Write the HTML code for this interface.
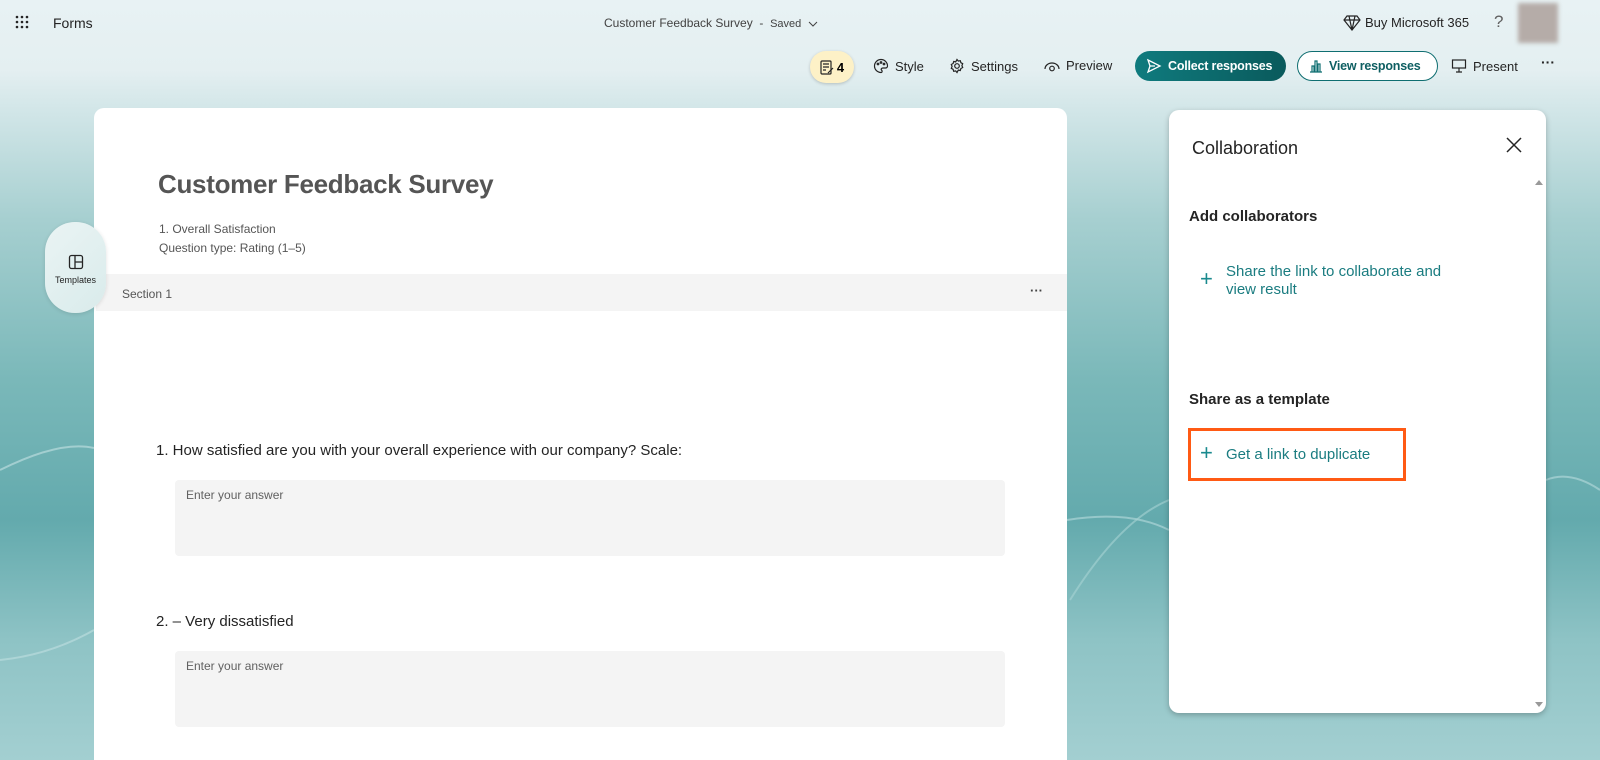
<!DOCTYPE html>
<html style="background:#a3cfd1"><head><meta charset="utf-8"><style>
*{margin:0;padding:0;box-sizing:border-box}
html,body{width:1600px;height:760px;overflow:hidden}
body{font-family:"Liberation Sans",sans-serif;position:relative;
background:linear-gradient(180deg,#e8f2f4 0px,#e4eff1 70px,#d2e6e8 110px,#a6cfd0 220px,#7ab8b9 380px,#63aaad 520px,#8ec3c5 640px,#a3cfd1 760px);}
.abs{position:absolute}
.t{color:#242424;font-size:13px}
.card{left:94px;top:108px;width:973px;height:660px;background:#fff;border-radius:10px 10px 0 0}
.panel{left:1169px;top:110px;width:377px;height:603px;background:#fff;border-radius:10px;box-shadow:0 2px 6px rgba(0,0,0,.25)}
.inp{background:#f4f4f4;border-radius:4px;width:830px;height:76px;left:175px;font-size:12px;color:#616161;padding:8px 11px}
.btn{top:51px;height:30px;border-radius:15px;font-size:12.5px;font-weight:bold;display:flex;align-items:center;gap:6px;padding:0 11px;white-space:nowrap;letter-spacing:-.2px}
.nav{top:58px;font-size:13px;color:#242424;display:flex;align-items:center;gap:6px;white-space:nowrap}
</style></head><body>
<svg class="abs" style="left:0;top:380px" width="1600" height="380"><path d="M0 90 Q60 60 94 68" stroke="#b9dcdd" stroke-width="2" fill="none" opacity=".7"/><path d="M0 280 Q50 275 94 250" stroke="#b9dcdd" stroke-width="2" fill="none" opacity=".7"/><path d="M1067 140 Q1130 130 1169 150" stroke="#b9dcdd" stroke-width="2" fill="none" opacity=".6"/><path d="M1070 220 Q1120 140 1169 120" stroke="#a9d3d4" stroke-width="2" fill="none" opacity=".6"/><path d="M1546 100 Q1570 90 1600 110" stroke="#b9dcdd" stroke-width="2" fill="none" opacity=".6"/></svg>
<svg class="abs" style="left:15px;top:15px" width="14" height="14" fill="#242424"><circle cx="2" cy="2" r="1.3"/><circle cx="7" cy="2" r="1.3"/><circle cx="12" cy="2" r="1.3"/><circle cx="2" cy="7" r="1.3"/><circle cx="7" cy="7" r="1.3"/><circle cx="12" cy="7" r="1.3"/><circle cx="2" cy="12" r="1.3"/><circle cx="7" cy="12" r="1.3"/><circle cx="12" cy="12" r="1.3"/></svg>
<div class="abs" style="left:53px;top:15px;font-size:14px;color:#242424">Forms</div>
<div class="abs" style="left:604px;top:16px;font-size:12px;color:#424242;white-space:nowrap">Customer Feedback Survey &nbsp;- &nbsp;<span style="font-size:11px">Saved</span> &nbsp;<svg width="10" height="6"><path d="M1 1l4 4 4-4" stroke="#424242" fill="none"/></svg></div>
<svg class="abs" style="left:1343px;top:14px" width="18" height="18" fill="none" stroke="#242424" stroke-width="1.2"><path d="M4 2h10l3 4-8 10-8-10z M1 6h16 M6 2l3 14 3-14"/></svg>
<div class="abs" style="left:1365px;top:15px;font-size:13px;color:#242424;white-space:nowrap">Buy Microsoft 365</div>
<div class="abs" style="left:1494px;top:12px;font-size:17px;color:#616161">?</div>
<div class="abs" style="left:1518px;top:3px;width:40px;height:40px;background:#b5aca8;filter:blur(2px)"></div>
<div class="abs" style="left:810px;top:51px;width:44px;height:32px;border-radius:16px;background:#fdf1c7;box-shadow:0 1px 3px rgba(0,0,0,.2);font-size:13px;font-weight:bold;display:flex;align-items:center;justify-content:center;gap:3px"><svg width="14" height="15" fill="none" stroke="#242424" stroke-width="1.2"><rect x="1" y="1" width="10" height="13" rx="1"/><path d="M3 4h6M3 7h6M3 10h3M8 13l5-5"/></svg>4</div>
<div class="abs nav" style="left:873px"><svg width="16" height="16" fill="none" stroke="#242424" stroke-width="1.2"><path d="M8 1.5a6.5 6.5 0 1 0 0 13c1.5 0 1.3-1.8.5-2.5s0-2 1.5-2h2.5a2 2 0 0 0 2-2A6.5 6.5 0 0 0 8 1.5z"/><circle cx="5" cy="6" r=".8"/><circle cx="8" cy="4.5" r=".8"/><circle cx="11" cy="6" r=".8"/></svg>Style</div>
<div class="abs nav" style="left:949px"><svg width="16" height="16" fill="none" stroke="#242424" stroke-width="1.2"><circle cx="8" cy="8" r="2.3"/><path d="M8 1.5l1.3 1.6 2-.4.6 2 1.8 1-.8 1.9.8 1.9-1.8 1-.6 2-2-.4L8 14.5l-1.3-1.6-2 .4-.6-2-1.8-1 .8-1.9-.8-1.9 1.8-1 .6-2 2 .4z"/></svg>Settings</div>
<div class="abs nav" style="left:1044px"><svg width="16" height="12" fill="none" stroke="#242424" stroke-width="1.2"><path d="M1 9a7 6 0 0 1 14 0"/><circle cx="8" cy="8.5" r="2.3"/></svg>Preview</div>
<div class="abs btn" style="left:1135px;width:151px;background:linear-gradient(90deg,#0f7b7e,#0a5a5c);color:#fff"><svg width="16" height="16" fill="none" stroke="#fff" stroke-width="1.3"><path d="M2 2l12 6-12 6 2-6z M4 8h5"/></svg>Collect responses</div>
<div class="abs btn" style="left:1297px;width:141px;background:#fff;border:1px solid #0f6e71;color:#0e5f62"><svg width="14" height="14" fill="none" stroke="#0e6e71" stroke-width="1.2"><path d="M1 13h12M3 13V7h2v6M6 13V2h2v11M9 13V5h2v8"/></svg>View responses</div>
<div class="abs nav" style="left:1451px"><svg width="16" height="16" fill="none" stroke="#242424" stroke-width="1.2"><rect x="1.5" y="2" width="13" height="8"/><path d="M8 10v4M5 14h6"/></svg>Present</div>
<div class="abs" style="left:1541px;top:54px;font-size:14px;font-weight:bold;color:#242424">···</div>
<div class="abs card"></div>
<div class="abs" style="left:45px;top:222px;width:61px;height:91px;border-radius:30px;background:linear-gradient(135deg,#eaf4f4,#d9ebeb);box-shadow:0 1px 4px rgba(0,0,0,.12);text-align:center;z-index:2">
<svg style="margin-top:32px" width="16" height="16" fill="none" stroke="#242424" stroke-width="1.3"><rect x="1.5" y="1.5" width="13" height="13" rx="2"/><path d="M7 1.5v13M7 8h7.5"/></svg>
<div style="font-size:9px;color:#242424">Templates</div></div>
<div class="abs" style="left:158px;top:169px;font-size:26px;color:#555;font-weight:bold;letter-spacing:-.3px">Customer Feedback Survey</div>
<div class="abs" style="left:159px;top:220px;font-size:12px;color:#555;line-height:19px">1. Overall Satisfaction<br>Question type: Rating (1–5)</div>
<div class="abs" style="left:96px;top:274px;width:971px;height:37px;background:#f4f4f4"></div>
<div class="abs" style="left:122px;top:287px;font-size:12px;color:#555">Section 1</div>
<div class="abs" style="left:1030px;top:283px;font-size:13px;color:#424242;font-weight:bold">···</div>
<div class="abs t" style="left:156px;top:442px;font-size:15px">1. How satisfied are you with your overall experience with our company? Scale:</div>
<div class="abs inp" style="top:480px">Enter your answer</div>
<div class="abs t" style="left:156px;top:613px;font-size:15px">2. – Very dissatisfied</div>
<div class="abs inp" style="top:651px">Enter your answer</div>
<div class="abs panel"></div>
<div class="abs" style="left:1192px;top:138px;font-size:18px;color:#242424">Collaboration</div>
<svg class="abs" style="left:1506px;top:137px" width="16" height="16" stroke="#242424" stroke-width="1.5"><path d="M1 1l14 14M15 1L1 15"/></svg>
<div class="abs" style="left:1535px;top:180px;width:0;height:0;border:4px solid transparent;border-bottom:5px solid #999;border-top:0"></div>
<div class="abs" style="left:1535px;top:702px;width:0;height:0;border:4px solid transparent;border-top:5px solid #999;border-bottom:0"></div>
<div class="abs" style="left:1189px;top:208px;font-size:15px;font-weight:bold;color:#242424">Add collaborators</div>
<div class="abs" style="left:1200px;top:266px;font-size:22px;color:#1a8a8e;font-weight:300">+</div>
<div class="abs" style="left:1226px;top:263px;font-size:15px;color:#1a7c80;line-height:18px">Share the link to collaborate and<br>view result</div>
<div class="abs" style="left:1189px;top:391px;font-size:15px;font-weight:bold;color:#242424">Share as a template</div>
<div class="abs" style="left:1188px;top:428px;width:218px;height:53px;border:3px solid #ff5a14"></div>
<div class="abs" style="left:1200px;top:440px;font-size:22px;color:#1a8a8e">+</div>
<div class="abs" style="left:1226px;top:446px;font-size:15px;color:#1a7c80">Get a link to duplicate</div>
</body></html>
